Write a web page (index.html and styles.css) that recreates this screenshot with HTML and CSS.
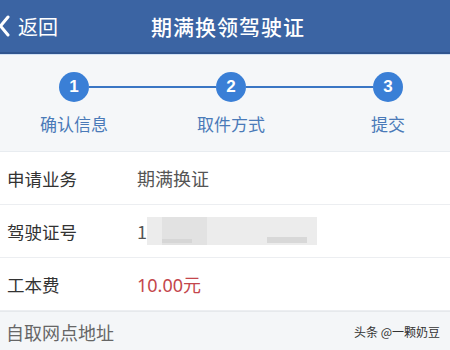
FILE: index.html
```html
<!DOCTYPE html>
<html>
<head>
<meta charset="utf-8">
<link rel="stylesheet" href="styles.css">
</head>
<body>
<header class="topbar">
  <div class="back">
    <svg class="chev" width="12" height="22" viewBox="0 0 12 22"><path d="M9 2 L1.5 11 L9 20" fill="none" stroke="#fff" stroke-width="3" stroke-linecap="round" stroke-linejoin="round"/></svg>
    <span>返回</span>
  </div>
  <h1 class="title">期满换领驾驶证</h1>
</header>
<section class="steps">
  <div class="step"><div class="dot">1</div><div class="lbl">确认信息</div></div>
  <div class="conn"></div>
  <div class="step"><div class="dot">2</div><div class="lbl">取件方式</div></div>
  <div class="conn"></div>
  <div class="step"><div class="dot">3</div><div class="lbl">提交</div></div>
</section>
<section class="list">
  <div class="row"><span class="k">申请业务</span><span class="v">期满换证</span></div>
  <div class="row"><span class="k">驾驶证号</span><span class="v">1<span class="blur"><i class="b1"></i><i class="b2"></i><i class="b3"></i></span></span></div>
  <div class="row last"><span class="k">工本费</span><span class="v red">10.00元</span></div>
</section>
<section class="foot">
  <span class="ftitle">自取网点地址</span>
  <span class="wm">头条 @一颗奶豆</span>
</section>
</body>
</html>
```
FILE: styles.css
```css
* { box-sizing: border-box; margin: 0; padding: 0; }
body {
  width: 450px; height: 350px; overflow: hidden;
  font-family: "Noto Sans CJK SC", "Noto Sans", sans-serif;
  background: #fff;
}
.topbar {
  height: 54px; background: #3b64a3;
  border-bottom: 2px solid #30558f;
  position: relative;
  display: flex; align-items: center; justify-content: center;
}
.back {
  position: absolute; left: 0; top: 0; height: 52px;
  display: flex; align-items: center; color: #fff; font-size: 20px;
}
.chev { margin-left: -1px; margin-right: 7px; }
.title { color: #fff; font-size: 21px; font-weight: 500; letter-spacing: 1px; margin-top: -1px; margin-left: 6px; }
.steps {
  height: 98px; background: #f5f7f9;
  border-top: 1px solid #d2e2f5;
  border-bottom: 1px solid #e8ecf0;
  display: flex; align-items: flex-start;
  padding: 17px 47px 0 59px;
}
.step { width: 30px; display: flex; flex-direction: column; align-items: center; }
.dot {
  width: 30px; height: 30px; border-radius: 50%;
  background: #3a7fd6; color: #fff;
  font-family: "Liberation Sans", sans-serif; font-weight: bold; font-size: 17px;
  display: flex; align-items: center; justify-content: center;
}
.conn { flex: 1; height: 2px; background: #3a76c4; margin-top: 14px; }
.lbl { white-space: nowrap; color: #4a7ab8; font-size: 17px; line-height: 22px; margin-top: 11px; }
.row {
  height: 53px; display: flex; align-items: center;
  border-bottom: 1px solid #eceef1;
  padding-left: 7px;
}
.k { width: 130px; font-size: 17.5px; color: #333; }
.v { font-size: 18px; color: #555; display: flex; align-items: center; }
.red { color: #c4464c; font-family: "Noto Sans", "Noto Sans CJK SC", sans-serif; }
.blur { display: block; position: relative; width: 170px; height: 28px; background: #ececec; }
.blur i { position: absolute; display: block; }
.b1 { left: 15px; top: 0; width: 45px; height: 28px; background: #e2e2e2; }
.b2 { left: 15px; top: 22px; width: 30px; height: 4px; background: #d6d6d6; }
.b3 { left: 120px; top: 20px; width: 40px; height: 6px; background: #d8d8d8; }
.foot {
  height: 40px; background: #f4f6f8;
  border-top: 1px solid #e6e9ec;
  display: flex; align-items: center; justify-content: space-between;
  padding: 0 10px 0 6px;
}
.ftitle { font-size: 18px; color: #666; }
.wm { font-size: 12px; color: #333; }
```
